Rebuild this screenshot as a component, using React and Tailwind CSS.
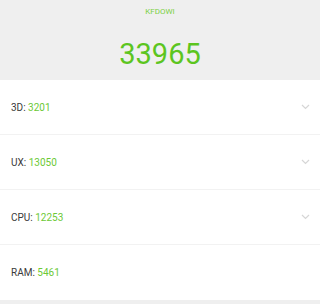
const rows = [
  { label: "3D", value: "3201", chevron: true },
  { label: "UX", value: "13050", chevron: true },
  { label: "CPU", value: "12253", chevron: true },
  { label: "RAM", value: "5461", chevron: false },
];

const Chevron = () => (
  <svg width="9" height="6" viewBox="0 0 9 6" fill="none">
    <path d="M1 1l3.5 3.5L8 1" stroke="#d6d6d6" strokeWidth="1.2" />
  </svg>
);

export default function App() {
  return (
    <div className="w-[320px] h-[304px] bg-[#efefef] overflow-hidden" style={{ fontFamily: "Roboto, 'Liberation Sans', sans-serif" }}>
      <div className="h-[80px] flex flex-col items-center">
        <div className="mt-[7px] text-[8px] leading-[10px] text-[#7ccf45]">KFDOWI</div>
        <div className="mt-[22px] text-[29px] leading-[30px] text-[#5cc51f]">33965</div>
      </div>
      <div className="bg-white">
        {rows.map((r, i) => (
          <div key={r.label} className={`h-[55px] flex items-center justify-between pl-[11px] pr-[10px] ${i < rows.length - 1 ? "border-b border-[#f2f2f2]" : ""}`}>
            <div className="text-[10px] text-[#3a3a3a]">
              {r.label}: <span className="text-[#6cc936]">{r.value}</span>
            </div>
            {r.chevron && <Chevron />}
          </div>
        ))}
      </div>
    </div>
  );
}
